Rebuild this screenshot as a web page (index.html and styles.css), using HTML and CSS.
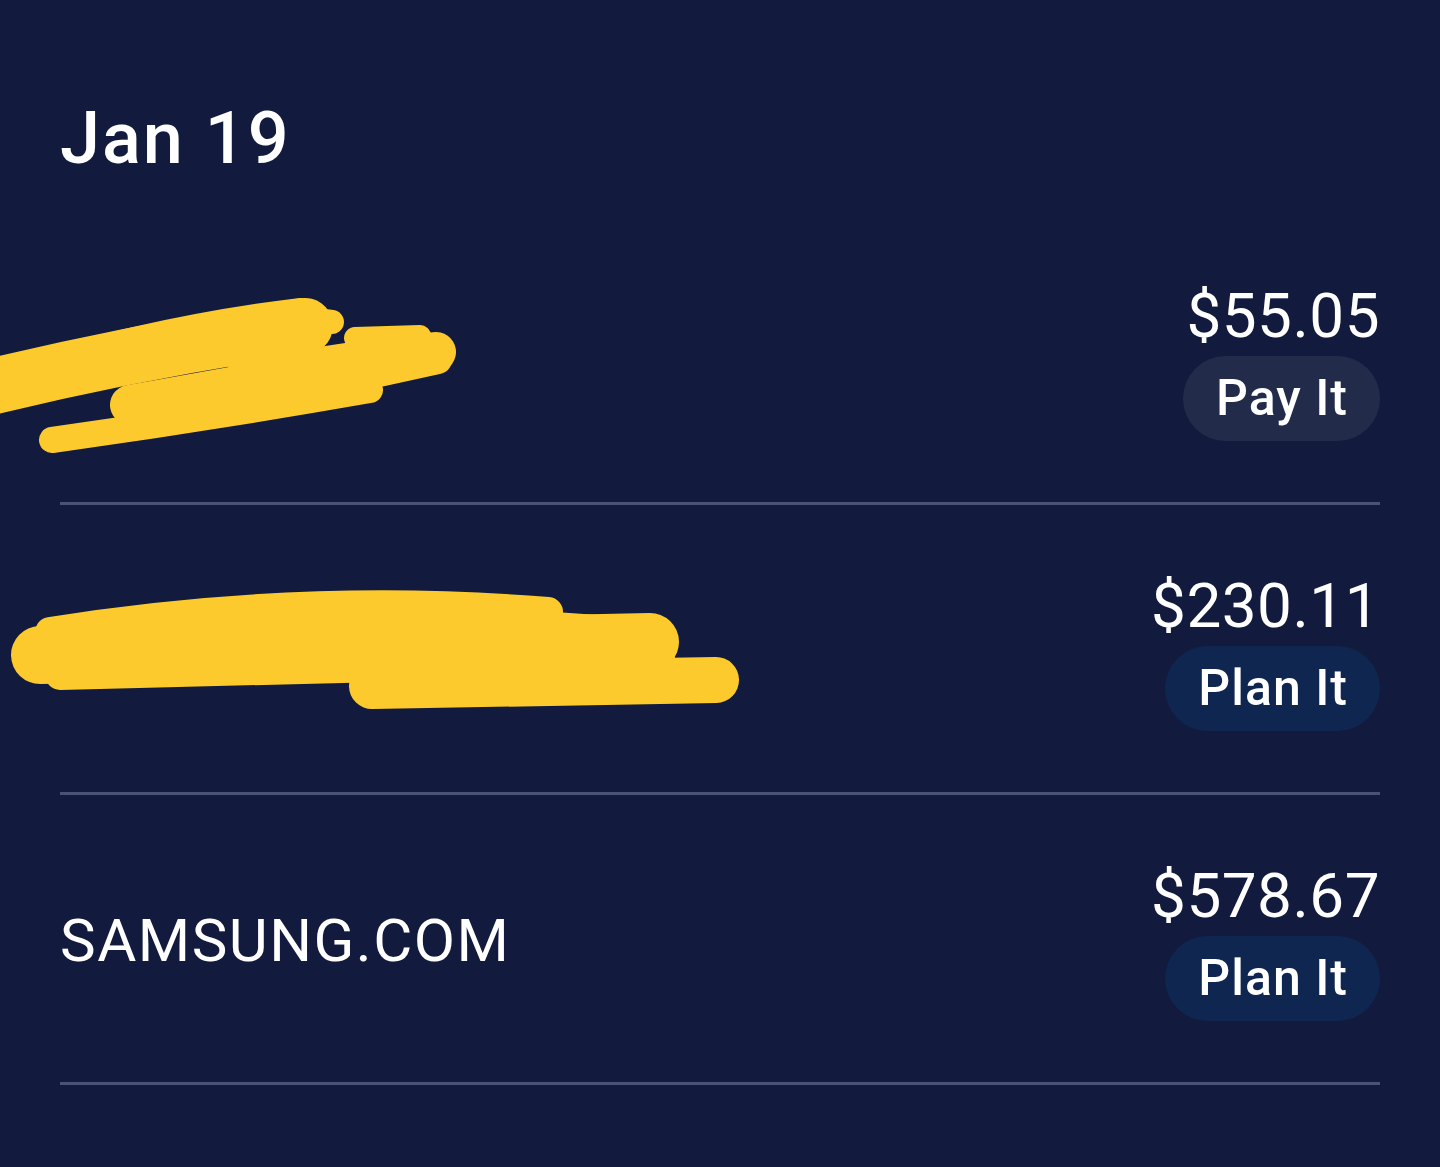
FILE: index.html
```html
<!DOCTYPE html>
<html lang="en">
<head>
    <meta charset="UTF-8">
    <meta name="viewport" content="width=device-width, initial-scale=1.0">
    <title>Transactions</title>
    <link rel="stylesheet" href="styles.css">
</head>
<body>
    <main class="page">
        <h1 class="date">Jan 19</h1>

        <ul class="txn-list">
            <li class="txn">
                <div class="txn-name">
                    <!-- redacted merchant name -->
                    <svg class="redact" viewBox="0 215 760 287" width="760" height="287">
                        <g fill="none" stroke="#fdca2e" stroke-linecap="round" stroke-linejoin="round">
                            <path d="M -30 392 Q 130 352 305 326" stroke-width="56"/>
                            <path d="M 20 378 Q 160 335 300 318" stroke-width="40"/>
                            <path d="M 285 316 L 332 322" stroke-width="24"/>
                            <path d="M 130 405 Q 300 374 436 352" stroke-width="40"/>
                            <path d="M 240 372 L 425 344" stroke-width="26"/>
                            <path d="M 210 410 L 438 360" stroke-width="28"/>
                            <path d="M 355 338 L 420 336" stroke-width="22"/>
                            <path d="M 52 440 Q 210 418 370 390" stroke-width="26"/>
                        </g>
                    </svg>
                </div>
                <div class="txn-side">
                    <span class="amount">$55.05</span>
                    <button class="pill pill-pay">Pay It</button>
                </div>
            </li>
            <li class="txn">
                <div class="txn-name">
                    <svg class="redact" viewBox="0 505 760 287" width="760" height="287">
                        <g fill="none" stroke="#fdca2e" stroke-linecap="round" stroke-linejoin="round">
                            <path d="M 40 655 L 650 642" stroke-width="58"/>
                            <path d="M 50 632 Q 300 592 548 612" stroke-width="30"/>
                            <path d="M 540 622 L 655 630" stroke-width="22"/>
                            <path d="M 60 675 L 660 660" stroke-width="30"/>
                            <path d="M 372 686 L 716 680" stroke-width="46"/>
                        </g>
                    </svg>
                </div>
                <div class="txn-side">
                    <span class="amount">$230.11</span>
                    <button class="pill pill-plan">Plan It</button>
                </div>
            </li>
            <li class="txn">
                <div class="txn-name">
                    <span class="merchant">SAMSUNG.COM</span>
                </div>
                <div class="txn-side">
                    <span class="amount">$578.67</span>
                    <button class="pill pill-plan">Plan It</button>
                </div>
            </li>
        </ul>
    </main>
</body>
</html>
```

FILE: styles.css
```css
/* General Reset */
* {
    margin: 0;
    padding: 0;
    box-sizing: border-box;
}

body {
    font-family: Roboto, "Liberation Sans", Arial, sans-serif;
    background-color: #121b3d;
    color: #fff;
    min-height: 100vh;
}

.page {
    padding: 96px 60px 0;
}

.date {
    font-size: 72px;
    font-weight: 500;
    line-height: 86px;
    letter-spacing: 2px;
    margin-bottom: 33px;
}

.txn-list {
    list-style: none;
}

.txn {
    position: relative;
    display: flex;
    justify-content: space-between;
    align-items: center;
    padding: 65px 0 61px;
    border-bottom: 3px solid #4b5374;
}

.txn-name {
    flex: 1;
}

/* scribble drawn over the name */
.redact {
    position: absolute;
    left: -60px;
    top: 0;
}

.merchant {
    font-size: 60px;
    line-height: 72px;
    letter-spacing: 1.5px;
}

.txn-side {
    display: flex;
    flex-direction: column;
    align-items: flex-end;
    gap: 4px;
}

.amount {
    font-size: 62px;
    line-height: 72px;
    letter-spacing: 0.5px;
}

.pill {
    font-family: inherit;
    font-size: 50px;
    font-weight: 500;
    letter-spacing: 1px;
    color: #fff;
    height: 85px;
    line-height: 85px;
    padding: 0 32px 0 33px;
    border: none;
    border-radius: 43px;
    cursor: pointer;
}

.pill-pay {
    background-color: #222b4a;
}

.pill-plan {
    background-color: #0e2650;
}
```
